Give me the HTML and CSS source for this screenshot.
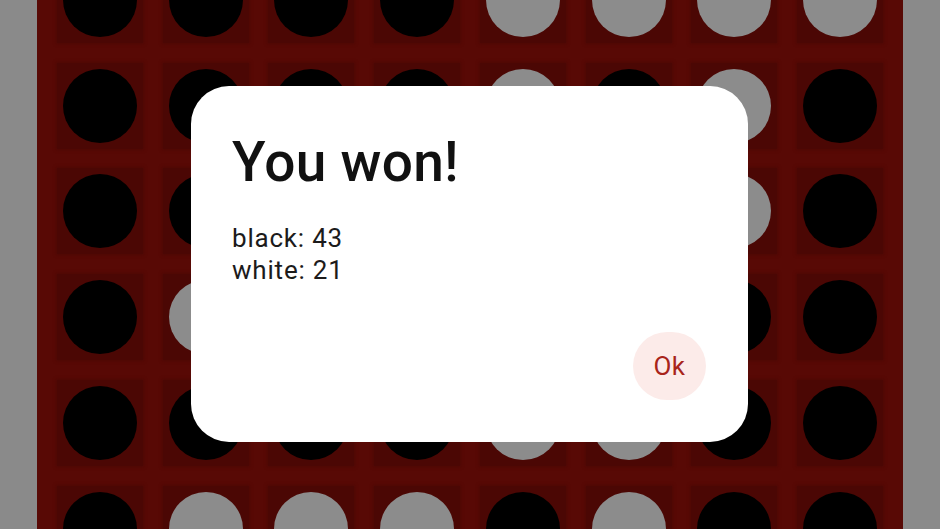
FILE: index.html
```html
<!DOCTYPE html>
<html>
<head>
<meta charset="utf-8">
<link rel="stylesheet" href="styles.css">
</head>
<body>
<div class="screen">
  <div class="board" id="board"></div>
  <div class="dialog">
    <h1 class="title">You won!</h1>
    <div class="body">
      <div>black: 43</div>
      <div>white: 21</div>
    </div>
    <div class="actions">
      <button class="ok">Ok</button>
    </div>
  </div>
</div>
<script>
var rows = [
  "BBBBWWWW",
  "BBBBWBWB",
  "BBBBBBWB",
  "BWBBBBBB",
  "BBBBWWBB",
  "BWWWBWBB",
  "BBBBBBBB",
  "BBBBBBBB"
];
var board = document.getElementById('board');
rows.forEach(function (r) {
  for (var i = 0; i < r.length; i++) {
    var cell = document.createElement('div');
    cell.className = 'cell';
    var sq = document.createElement('div');
    sq.className = 'well';
    var d = document.createElement('div');
    d.className = 'disk ' + (r[i] === 'B' ? 'black' : 'white');
    sq.appendChild(d);
    cell.appendChild(sq);
    board.appendChild(cell);
  }
});
</script>
</body>
</html>
```
FILE: styles.css
```css
* { box-sizing: border-box; }
html, body {
  margin: 0;
  padding: 0;
  width: 940px;
  height: 529px;
  overflow: hidden;
  background: #8a8a8a;
  font-family: Roboto, "Liberation Sans", sans-serif;
}
.screen {
  position: relative;
  width: 940px;
  height: 529px;
  overflow: hidden;
}
.board {
  width: 866px;
  margin: -63px auto 0;
  padding: 10px;
  background: #580905;
  display: grid;
  grid-template-columns: repeat(8, 105.75px);
  grid-auto-rows: 105.75px;
}
.cell {
  display: flex;
  align-items: center;
  justify-content: center;
}
.well {
  width: 86px;
  height: 86px;
  background: #4b0704;
  box-shadow: 0 0 3px 1px #4e0804;
  display: flex;
  align-items: center;
  justify-content: center;
}
.disk {
  width: 74px;
  height: 74px;
  border-radius: 50%;
}
.disk.black { background: #000; }
.disk.white { background: #8c8c8c; }

.dialog {
  position: absolute;
  left: 191px;
  top: 86px;
  width: 557px;
  height: 356px;
  background: #fff;
  border-radius: 38px;
  padding: 44px 42px 42px 41px;
  display: flex;
  flex-direction: column;
}
.title {
  margin: 0;
  font-size: 55px;
  line-height: 64px;
  font-weight: 500;
  color: #111;
  letter-spacing: 0.3px;
}
.body {
  margin-top: 28px;
  font-size: 26px;
  line-height: 32px;
  color: #1c1b1b;
  letter-spacing: 0.8px;
}
.actions {
  margin-top: auto;
  display: flex;
  justify-content: flex-end;
}
.ok {
  width: 73px;
  height: 68px;
  border: none;
  border-radius: 34px;
  background: #fcebe9;
  color: #a8241a;
  font-family: Roboto, "Liberation Sans", sans-serif;
  font-size: 26px;
  letter-spacing: 0.5px;
  padding: 0;
}
```
